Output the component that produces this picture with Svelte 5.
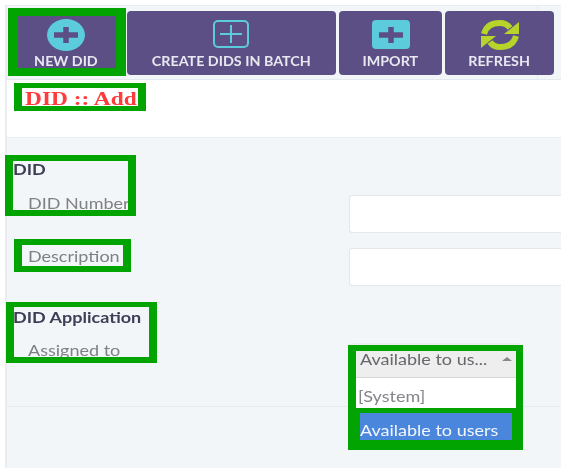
<script>
	const actions = [
		{ label: 'New DID', icon: 'circle', width: 116 },
		{ label: 'Create DIDs in batch', icon: 'outline', width: 209 },
		{ label: 'Import', icon: 'square', width: 103 },
		{ label: 'Refresh', icon: 'refresh', width: 109 }
	];
</script>

<div class="page">
	<div class="toolbar">
		{#each actions as action}
			<button class="action" style="width: {action.width}px">
				<svg viewBox="0 0 38 30" preserveAspectRatio="none" class="icon">
					{#if action.icon === 'circle'}
						<ellipse cx="19" cy="15" rx="19" ry="16" fill="#5ccbdc" />
						<path d="M7 15H31M19 7V23" stroke="#5b4f85" stroke-width="5.5" />
					{:else if action.icon === 'outline'}
						<rect x="1" y="1" width="34" height="26" rx="4" fill="none" stroke="#5ccbdc" stroke-width="2" />
						<path d="M7 14H29M18 5V23" stroke="#5ccbdc" stroke-width="2" />
					{:else if action.icon === 'square'}
						<rect x="0" y="0" width="38" height="29" rx="4" fill="#5ccbdc" />
						<path d="M7 15H31M19 7V23" stroke="#5b4f85" stroke-width="5.5" />
					{:else}
						<path d="M3 14C5 6 11 3 19 3C24 3 27 5 29 8" fill="none" stroke="#b7d42a" stroke-width="6" />
						<path d="M38 2V14H23Z" fill="#b7d42a" />
						<path d="M35 16C33 24 27 27 19 27C14 27 11 25 9 22" fill="none" stroke="#b7d42a" stroke-width="6" />
						<path d="M0 28V16H15Z" fill="#b7d42a" />
					{/if}
				</svg>
				<span>{action.label}</span>
			</button>
		{/each}
	</div>

	<div class="heading">
		<h1>DID :: Add</h1>
	</div>

	<div class="form">
		<h2 class="first"><span class="wide">DID</span></h2>
		<div class="row">
			<label for="num"><span class="wide">DID Number</span></label>
			<input id="num" type="text" />
		</div>
		<div class="row">
			<label for="desc"><span class="wide">Description</span></label>
			<input id="desc" type="text" />
		</div>

		<h2 class="second"><span class="wide">DID Application</span></h2>
		<div class="row assign">
			<span class="label"><span class="wide">Assigned to</span></span>
			<div class="select">
				<div class="current">
					<span class="wide">Available to us...</span>
					<i class="caret"></i>
				</div>
				<div class="option"><span class="wide">[System]</span></div>
				<div class="option active"><span class="wide">Available to users</span></div>
			</div>
		</div>
		<div class="divider"></div>
	</div>

	<!-- green annotation frames drawn over the screenshot -->
	<div class="mark m1"></div>
	<div class="mark m2"></div>
	<div class="mark m3"></div>
	<div class="mark m4"></div>
	<div class="mark m5"></div>
	<div class="mark m6"></div>
	<div class="mark m7"></div>
</div>

<style>
	:global(body) {
		background: #fff;
	}

	.page {
		position: relative;
		width: 561px;
		height: 468px;
		box-sizing: border-box;
		padding: 5px 0 0 5px;
		font-family: Lato, "Open Sans", sans-serif;
		filter: blur(0.5px);
	}

	/* the reference was stretched sideways, so text runs wider than it is tall */
	.wide {
		display: inline-block;
		white-space: nowrap;
		transform: scaleX(1.2);
		transform-origin: left center;
	}

	.toolbar {
		position: relative;
		display: flex;
		gap: 3px;
		height: 75px;
		box-sizing: border-box;
		padding: 5px 0 0 1px;
		background: #f3f6f9;
		border-top: 1px solid #e9edf1;
		border-bottom: 1px solid #e3e9ec;
		border-left: 2px solid #e9edf1;
	}

	.toolbar::after {
		content: '';
		position: absolute;
		top: 0;
		bottom: 0;
		left: 530px;
		border-left: 1px solid #e6ebef;
	}

	.action {
		position: relative;
		z-index: 1;
		display: flex;
		flex-direction: column;
		align-items: center;
		flex: none;
		height: 64px;
		padding: 9px 0 0;
		border: 0;
		border-radius: 4px;
		background: #5b4f85;
		color: #e8e8f0;
		font-family: inherit;
	}

	.icon {
		display: block;
		width: 38px;
		height: 30px;
		overflow: visible;
	}

	.action span {
		margin-top: 4px;
		font-size: 13px;
		line-height: 14px;
		font-weight: 700;
		text-transform: uppercase;
		white-space: nowrap;
		transform: scaleX(1.1);
	}

	.heading {
		height: 57px;
		box-sizing: border-box;
		padding: 8px 0 0 18px;
		border-left: 2px solid #e9edf1;
	}

	h1 {
		width: fit-content;
		margin: 0;
		font: bold 19px/22px "Liberation Serif", serif;
		color: #ff3b3b;
		transform: scaleX(1.23);
		transform-origin: left center;
	}

	.form {
		position: relative;
		height: 331px;
		box-sizing: border-box;
		padding-top: 22px;
		background: #f3f6f9;
		border-top: 1px solid #e9edf1;
		border-left: 2px solid #e9edf1;
	}

	h2 {
		margin: 0 0 0 6px;
		font-size: 15px;
		line-height: 18px;
		font-weight: 700;
		color: #3d3f56;
	}

	.second {
		margin-top: 22px;
	}

	.row {
		display: grid;
		grid-template-columns: 342px 1fr;
		align-items: start;
		margin-bottom: 15px;
	}

	.row:first-of-type {
		margin-top: 17px;
	}

	label,
	.label {
		padding-left: 21px;
		margin-top: -1px;
		font-size: 15px;
		line-height: 18px;
		color: #7f7f86;
	}

	input {
		height: 38px;
		width: 100%;
		box-sizing: border-box;
		padding: 0;
		border: 1px solid #e5e6e8;
		border-right: 0;
		border-radius: 3px 0 0 3px;
		background: #fff;
	}

	.assign {
		margin-top: 8px;
		margin-bottom: 0;
	}

	.assign .label {
		margin-top: 7px;
	}

	.select {
		position: relative;
		z-index: 1;
		width: 174px;
		margin-top: 9px;
		font-size: 15px;
	}

	.current {
		display: flex;
		justify-content: space-between;
		height: 35px;
		box-sizing: border-box;
		padding: 7px 11px 0;
		line-height: 18px;
		background: #eee;
		border-radius: 3px 3px 0 0;
		border-bottom: 1px solid #d8d8d8;
		color: #66666c;
	}

	.caret {
		width: 0;
		height: 0;
		margin-top: 7px;
		border: 5px solid transparent;
		border-top: 0;
		border-bottom: 4px solid #888;
	}

	.option {
		height: 30px;
		box-sizing: border-box;
		padding-left: 9px;
		line-height: 36px;
		background: #fff;
		color: #85858c;
	}

	.active {
		width: 152px;
		height: 27px;
		margin: 5px 0 0 11px;
		padding: 0;
		line-height: 34px;
		background: #4a86dc;
		color: #f2f6fd;
	}

	.divider {
		position: absolute;
		left: 0;
		right: 0;
		top: 268px;
		border-top: 1px solid #e6ebf0;
	}

	.mark {
		position: absolute;
		z-index: 2;
		box-sizing: border-box;
		border: 6px solid #02a402;
		pointer-events: none;
	}

	.m1 {
		left: 8px;
		top: 8px;
		width: 118px;
		height: 68px;
		border-width: 8px 10px;
	}

	.m2 {
		left: 14px;
		top: 83px;
		width: 132px;
		height: 28px;
		border-width: 5px 8px;
	}

	.m3 {
		left: 5px;
		top: 155px;
		width: 131px;
		height: 61px;
		border-width: 6px 8px;
	}

	.m4 {
		left: 14px;
		top: 239px;
		width: 117px;
		height: 33px;
		border-width: 6px 8px;
	}

	.m5 {
		left: 6px;
		top: 302px;
		width: 151px;
		height: 61px;
		border-width: 5px 8px 6px;
	}

	.m6 {
		left: 348px;
		top: 345px;
		width: 175px;
		height: 68px;
		border-width: 6px 7px 5px 8px;
	}

	.m7 {
		left: 348px;
		top: 408px;
		width: 175px;
		height: 42px;
		border-width: 5px 11px 10px 12px;
	}
</style>
